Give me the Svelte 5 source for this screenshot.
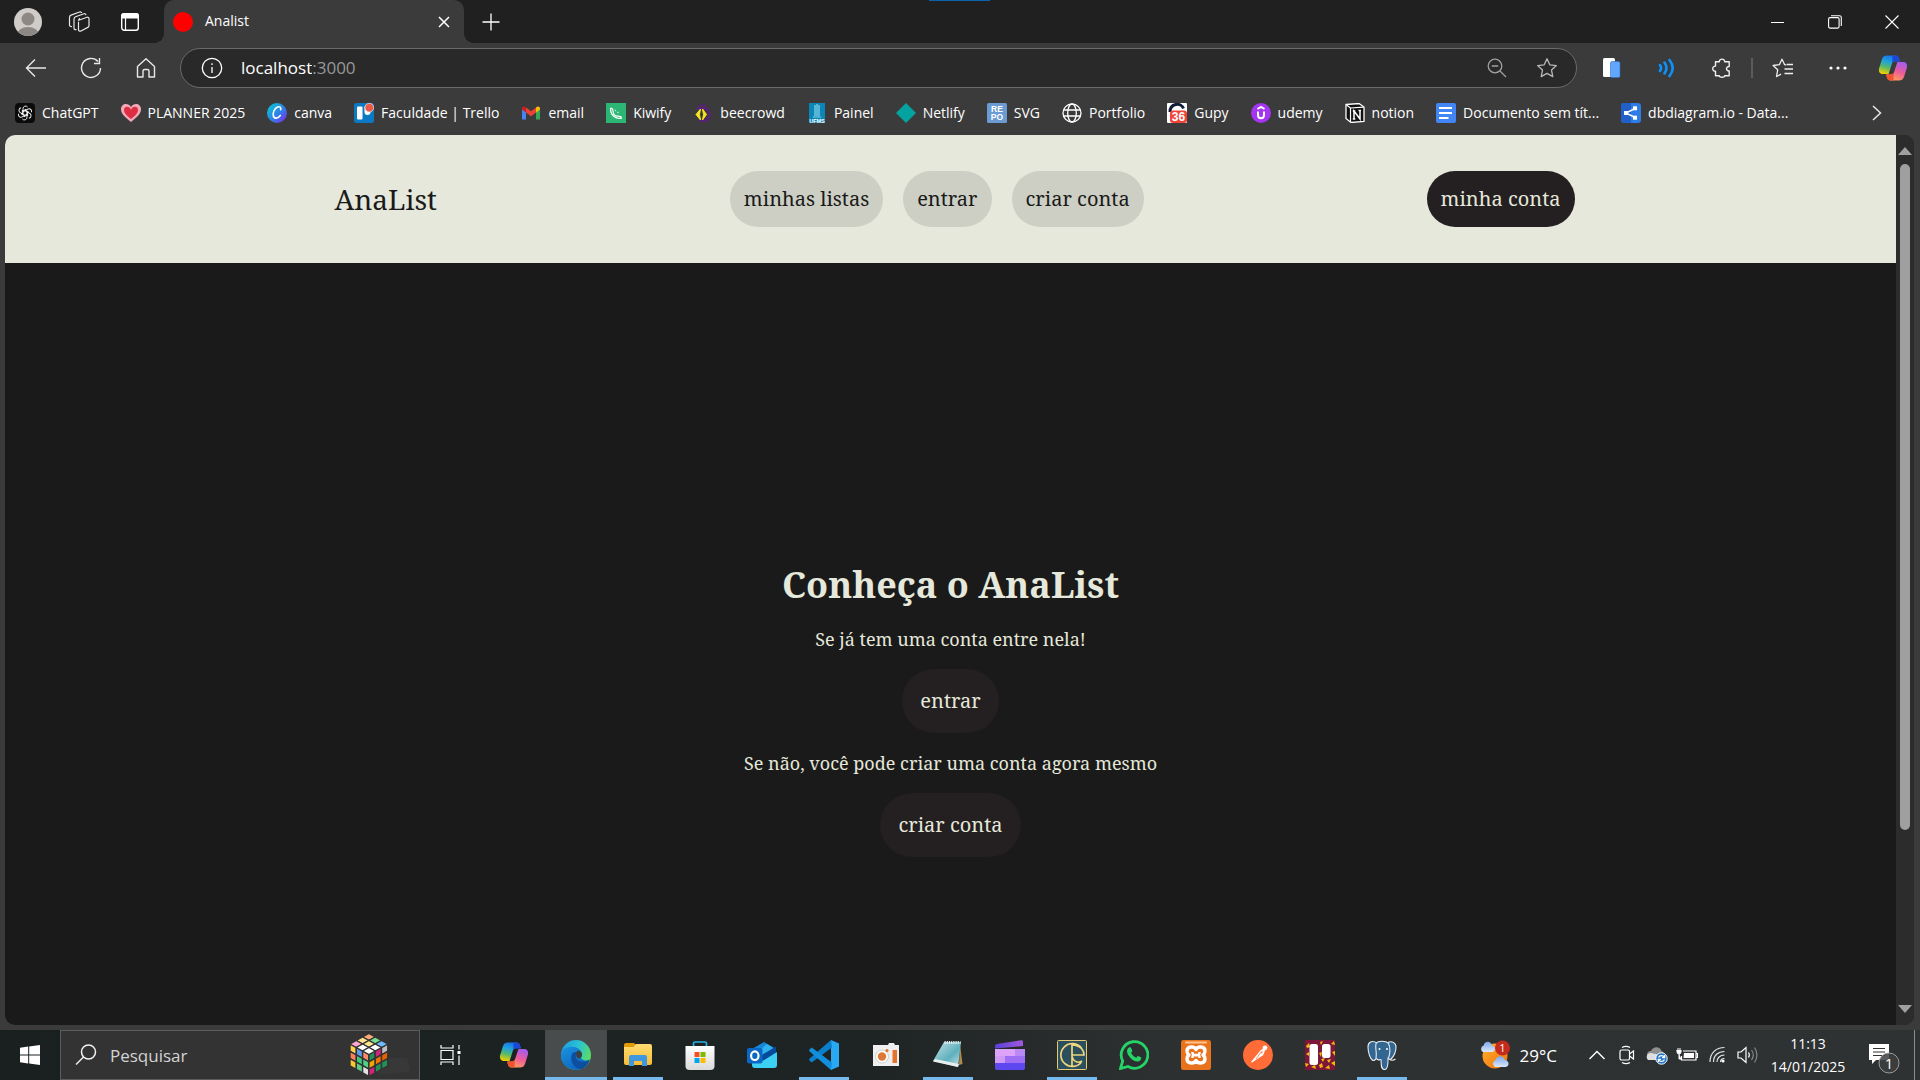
<script>
  const bookmarks = [
    ['chatgpt', 'ChatGPT'],
    ['heart', 'PLANNER 2025'],
    ['canva', 'canva'],
    ['trello', 'Faculdade | Trello'],
    ['gmail', 'email'],
    ['kiwify', 'Kiwify'],
    ['bee', 'beecrowd'],
    ['painel', 'Painel'],
    ['netlify', 'Netlify'],
    ['repo', 'SVG'],
    ['globe', 'Portfolio'],
    ['gupy', 'Gupy'],
    ['udemy', 'udemy'],
    ['notion', 'notion'],
    ['docs', 'Documento sem tít...'],
    ['dbdiagram', 'dbdiagram.io - Data...']
  ];

  const apps = [
    { icon: 'copilot', label: 'Copilot' },
    { icon: 'edge', label: 'Edge', open: true, active: true },
    { icon: 'explorer', label: 'Explorador de Arquivos', open: true },
    { icon: 'store', label: 'Microsoft Store' },
    { icon: 'outlook', label: 'Outlook' },
    { icon: 'vscode', label: 'Visual Studio Code', open: true },
    { icon: 'recorder', label: 'Gravador' },
    { icon: 'notepad', label: 'Bloco de Notas', open: true },
    { icon: 'clipchamp', label: 'Clipchamp' },
    { icon: 'ce', label: 'CE', open: true },
    { icon: 'whatsapp', label: 'WhatsApp' },
    { icon: 'xampp', label: 'XAMPP' },
    { icon: 'postman', label: 'Postman' },
    { icon: 'board', label: 'Trello' },
    { icon: 'postgres', label: 'pgAdmin', open: true }
  ];

  const links = ['minhas listas', 'entrar', 'criar conta'];
</script>

{#snippet bookmarkIcon(name)}
  <svg class="fav" viewBox="0 0 20 20" aria-hidden="true">
    {#if name === 'chatgpt'}
      <rect width="20" height="20" rx="4" fill="#0b0b0b" />
      <g fill="none" stroke="#fff" stroke-width=".9">
        {#each [0, 60, 120, 180, 240, 300] as a}
          <path d="M8 8.900V5.600a2.600 2.600 0 0 1 4.600-1.600M8 8.900l2.700-1.600 3.200 1.900" transform="rotate({a} 10 10)" />
        {/each}
      </g>
    {:else if name === 'heart'}
      <path d="M10 19C4 14 0 11 0 6.300C0 3 2.200 1 5 1c2 0 4 1 5 3 1-2 3-3 5-3 2.800 0 5 2 5 5.300C20 11 16 14 10 19z" fill="#f4a9b8" />
      <path d="M10 16C5.500 12.500 3 10 3 7c0-2 1.300-3.200 3-3.200 2 0 3.200 1.200 4 3 .8-1.800 2-3 4-3 1.700 0 3 1.200 3 3.200 0 3-2.500 5.500-7 9z" fill="#dd2e44" />
    {:else if name === 'canva'}
      <circle cx="10" cy="10" r="10" fill="url(#g-canva)" />
      <path d="M13.600 6.700c.8-2.300-1-3.400-3-2.600C7.400 5.400 5.600 9.700 6.300 12.700c.7 3.300 4.600 3.300 7-.2" fill="none" stroke="#fff" stroke-width="1.600" stroke-linecap="round" />
    {:else if name === 'trello'}
      <rect y="0" width="20" height="20" rx="2.500" fill="#0b79c4" />
      <rect x="3" y="3.500" width="5.500" height="13" rx="1" fill="#fff" />
      <path d="M10.500 3.500h6V9a3 3 0 0 1-6 0z" fill="#fff" />
      <circle cx="15.300" cy="4.700" r="4.400" fill="#eb5a46" stroke="#fff" stroke-width=".6" />
    {:else if name === 'gmail'}
      <path d="M1 5v11.500h4V8z" fill="#4285f4" />
      <path d="M15 8v8.500h4V5z" fill="#34a853" />
      <path d="M15 4.500 10 8.300 5 4.500v5l5 3.800 5-3.800z" fill="#ea4335" />
      <path d="M1 5.500C1 3 3.500 2.800 5 4.500v5L1 6.500z" fill="#c5221f" />
      <path d="M19 5.500C19 3 16.500 2.800 15 4.500v5l4-3z" fill="#fbbc04" />
    {:else if name === 'kiwify'}
      <rect width="20" height="20" fill="#2bb673" />
      <path d="M4.500 5c0 7 3.500 10.500 11 10.500M4.500 5c2 0 2.500 1.500 2.600 3.500.2 3 2 4.800 5 4.700 2 0 3.400.3 3.400 2.300" fill="none" stroke="#fff" stroke-width="1.200" />
      <path d="M9 6.500l1 2M13 9l-2 1" stroke="#fff" stroke-width=".7" />
    {:else if name === 'bee'}
      <path d="M6 3 8 1.500M12 3l-2-1.500M4 5.500h9.500l3.500 6-3.500 6H6" fill="none" stroke="#5b2080" stroke-width="2.400" />
      <path d="M7.500 6 3 11.500 7.500 17 6.500 11.500z" fill="#f8e71c" stroke="#f8e71c" />
      <path d="M9.500 6l4 5.500-4 5.500 1-5.500z" fill="#f8e71c" stroke="#f8e71c" />
    {:else if name === 'painel'}
      <rect x="2" width="16" height="20" fill="#0a86b8" />
      <path d="M8 2v11M10 1v12M12 2v11M6 14h8" stroke="#8fd4ea" stroke-width="1.200" />
      <text x="10" y="19.500" font-size="5.500" font-weight="700" text-anchor="middle" fill="#fff">UFMS</text>
    {:else if name === 'netlify'}
      <path d="M10 0l10 10-10 10L0 10z" fill="#05a3a0" />
    {:else if name === 'repo'}
      <rect width="20" height="20" rx="1.500" fill="#6b9bd2" />
      <g font-size="8.500" font-weight="700" text-anchor="middle" fill="#fff"><text x="10" y="8.800">RE</text><text x="10" y="17.300">PO</text></g>
    {:else if name === 'globe'}
      <g fill="none" stroke="#fff" stroke-width="1.300"><circle cx="10" cy="10" r="9" /><ellipse cx="10" cy="10" rx="4.300" ry="9" /><path d="M1.500 7h17M1.500 13h17" /></g>
    {:else if name === 'gupy'}
      <rect width="20" height="20" rx="1" fill="#fff" />
      <path d="M3 9c0-9 11-10 13.500-3.500" fill="none" stroke="#111c3a" stroke-width="3" />
      <rect x="3" y="7.500" width="17" height="12.500" rx="3" fill="#f04438" />
      <text x="11.500" y="18" font-size="12" font-weight="700" text-anchor="middle" fill="#fff">36</text>
    {:else if name === 'udemy'}
      <circle cx="10" cy="10" r="10" fill="#a435f0" />
      <path d="M6.500 6 10 4l3.500 2M7 8.500V12c0 4.300 6 4.300 6 0V8.500" fill="none" stroke="#fff" stroke-width="2" />
    {:else if name === 'notion'}
      <path d="M1 1.500 14 .5l5 3.500v14.500l-13 1-5-4z" fill="#111" stroke="#fff" stroke-width="1.300" />
      <path d="M1.500 2 5.500 5v14M5.500 5l13-.8" fill="none" stroke="#fff" stroke-width="1.200" />
      <path d="M9 16V8l6 8V7.500M7.800 8h2.500M13.500 7.500h2.500M7.800 16h2.500" fill="none" stroke="#fff" stroke-width="1.500" />
    {:else if name === 'docs'}
      <rect width="20" height="20" rx="2" fill="#4285f4" />
      <path d="M3 5h13M3 10h13M3 15h9.500" stroke="#fff" stroke-width="2.200" />
    {:else}
      <rect width="20" height="20" rx="3" fill="#2f7be8" />
      <path d="M3 0h7v20H3a3 3 0 0 1-3-3V3a3 3 0 0 1 3-3z" fill="#2160c9" />
      <path d="M14 5.500 5 10l9 4.500" fill="none" stroke="#fff" stroke-width="1.400" />
      <g fill="#fff"><rect x="12" y="3.300" width="4" height="4" /><rect x="12" y="12.700" width="4" height="4" /><rect x="3" y="8" width="4" height="4" /></g>
    {/if}
  </svg>
{/snippet}

{#snippet copilot()}
  <path d="M9 2.500h8.500c2 0 3 1 3.500 3l.8 2.800h-4.500c-2 0-3 1-3.500 2.800L10.600 21H5C1.500 21 .3 18.500 1.200 15L4 6c.8-2.400 2.600-3.500 5-3.500z" fill="url(#g-cop1)" />
  <path d="M14.500 2.500h3c2 0 3 1 3.500 3l.8 2.800h-4c-2 0-3 .8-3.500 2z" fill="#1b48d8" />
  <path d="M21 27.500h-8.500c-2 0-3-1-3.500-3l-.8-3h4.500c2 0 3-1 3.500-2.800L19.400 9H25c3.500 0 4.700 2.500 3.800 6L26 24c-.8 2.400-2.600 3.500-5 3.500z" fill="url(#g-cop2)" />
  <path d="M15.500 27.500h-3c-2 0-3-1-3.500-3l-.8-3h4c2 0 3-.8 3.500-2z" fill="#f0532d" />
{/snippet}

{#snippet appIcon(name)}
  <svg class="app-icon" viewBox="0 0 30 30" aria-hidden="true">
    {#if name === 'copilot'}
      {@render copilot()}
    {:else if name === 'edge'}
      <circle cx="15" cy="15" r="15" fill="url(#g-edge1)" />
      <path d="M0 15C1 8 7 6.500 11.500 6.800 17 7.200 21 10.500 21 14.500c0 1.500-1 2.500-1 3.300 0 1.300 2 2.700 5 2.700 1.500 0 2.800-.5 3.700-1C27 26 21.500 30 15 30 6.500 30-.5 23 0 15z" fill="url(#g-edge2)" />
      <path d="M11 14c-2.500 7 1.500 13.500 8.500 15.300 4.500-1.500 8-5 9.200-9.800-4.500 3.600-12 3-13.700-1.500-.8-2.200.2-4.500 1.600-5.400-2-1.300-4.700-.7-5.600 1.400z" fill="#0d4f9e" />
      <path d="M20 17.500c.8-1 1-2 1-3.200-.3-2.500-2.500-4-4.800-3.500-1.500 2-1.400 4.500-.6 6.200 1.300 1.800 2.800 1.700 4.400.5z" fill="#3a4043" />
    {:else if name === 'explorer'}
      <path d="M1 5a2 2 0 0 1 2-2h8l3 3h-3L9 8H1z" fill="#e09b00" />
      <path d="M1 7h9l3-3h14a2 2 0 0 1 2 2v17a2 2 0 0 1-2 2H3a2 2 0 0 1-2-2z" fill="url(#g-folder)" />
      <path d="M6 26V17a2 2 0 0 1 2-2h14a2 2 0 0 1 2 2v9h-5v-5h-8v5z" fill="#3f97dd" />
    {:else if name === 'store'}
      <path d="M8.500 7V3.500C8.500 2.500 9 2 10 2h10c1 0 1.500.5 1.500 1.500V7" fill="none" stroke="#27b4e8" stroke-width="1.700" />
      <path d="M.5 6h29v20a4 4 0 0 1-4 4h-21a4 4 0 0 1-4-4z" fill="url(#g-store)" />
      <path d="M9.500 12h5v5h-5z" fill="#f25022" /><path d="M15.500 12h5v5h-5z" fill="#7fba00" /><path d="M9.500 18h5v5h-5z" fill="#00a4ef" /><path d="M15.500 18h5v5h-5z" fill="#ffb900" />
    {:else if name === 'outlook'}
      <path d="M5 9 17 2l12 7v7l-9 6H5z" fill="#1587d8" />
      <path d="M20 4l9 6-14 9-9-3z" fill="#30b2ee" />
      <path d="M29 6.500V14L15 21l-2-5z" fill="#064a9b" />
      <path d="M30 12v13a3 3 0 0 1-3 3H8c-2 0-3-1-3-3v-3h9z" fill="#3dd0f5" />
      <rect y="8" width="15.500" height="15.500" rx="2" fill="#0b67c4" />
      <ellipse cx="7.800" cy="15.700" rx="3.700" ry="4.300" fill="none" stroke="#fff" stroke-width="2.200" />
    {:else if name === 'vscode'}
      <path d="M22 0l8 3.500v23L22 30z" fill="#29a9f2" />
      <path d="M22 0 .7 18.500c-.8.700-.8 1.500 0 2.200l2 1.800L23 7.500z" fill="#0b7fcb" />
      <path d="M22 30 .7 11.500c-.8-.7-.8-1.500 0-2.200l2-1.800L23 22.500z" fill="#128fdc" />
    {:else if name === 'recorder'}
      <path d="M2 5h15l1-2h5l1 2h4v21H2z" fill="#efefef" />
      <circle cx="11" cy="16.500" r="6.500" fill="#fff" stroke="#cfcfcf" /><circle cx="11" cy="16.500" r="4.200" fill="#e07836" />
      <rect x="21.500" y="10" width="4.500" height="13" fill="#e3742c" /><circle cx="16" cy="10.500" r="1.600" fill="#e3742c" />
    {:else if name === 'notepad'}
      <path d="M27 4 29.500 24 26 25z" fill="#b08a4a" />
      <path d="M11 2h17l-3 25L0 21z" fill="url(#g-note)" />
      <path d="M0 21.500 25 27l1-3L2 19z" fill="#e8eeee" />
      <path d="M11.500 2.500h16" stroke="#e9eeee" stroke-width="3" stroke-dasharray="1.200 1" />
    {:else if name === 'clipchamp'}
      <path d="M0 8.500V6c0-1 .7-1.700 1.700-1.900L26 .3c1.300-.2 2 .4 2 1.700v4z" fill="url(#g-clip1)" />
      <path d="M0 9h30v18a3 3 0 0 1-3 3H3a3 3 0 0 1-3-3z" fill="#7c55f2" />
      <path d="M0 9h30v7H0z" fill="#b98af5" /><path d="M0 9h20v7H0z" fill="#dda3fb" /><path d="M0 16h10v7H0z" fill="#ce9af5" /><path d="M10 16h20v7H10z" fill="#a06df5" /><path d="M0 23h30v4a3 3 0 0 1-3 3H3a3 3 0 0 1-3-3z" fill="#5c48ee" />
    {:else if name === 'ce'}
      <rect x=".5" y=".5" width="29" height="29" rx="1" fill="#2b4f5c" stroke="#e3cc75" />
      <path d="M24.500 8A11.500 11.500 0 1 0 24.500 22M15 3.500v23M15 15h12c0-10-12-10-12-10M15 15c0 6 6 9 10 6" fill="none" stroke="#eed57c" stroke-width="1.700" />
    {:else if name === 'whatsapp'}
      <path d="M1.500 28.500 3.700 21A13.300 13.300 0 1 1 9 26.500z" fill="none" stroke="#25d366" stroke-width="2.800" />
      <path d="M10 7.500c1-.6 2 0 2.300.8l1 2.500c.2.600-.9 1.600-1.200 2 1 2.300 2.700 3.900 5.100 4.900.6-.3 1.400-1.900 2-1.700l3 1.500c.5 2.500-2 4-3.800 4C13.500 21.300 8.500 16 8 11.500c-.1-1.500.8-3 2-4z" fill="#25d366" />
    {:else if name === 'xampp'}
      <rect width="30" height="30" rx="2.500" fill="#e8731c" /><rect x="4" y="1.500" width="22" height="2" rx="1" fill="#ffc48e" />
      <path d="M15 9.500C13.500 6 6 6 6 11c0 2 .5 3 2 4-1.500 1-2 2-2 4 0 5 7.500 5 9 1.500 1.500 3.500 9 3.500 9-1.500 0-2-.5-3-2-4 1.500-1 2-2 2-4 0-5-7.500-5-9-1.500z" fill="none" stroke="#fff" stroke-width="3.400" stroke-linejoin="round" />
      <path d="M11.500 12v1.500c0 2 7 1 7 3V18M18.500 12v1.500c0 2-7 1-7 3V18" fill="none" stroke="#fff" stroke-width="2.400" />
    {:else if name === 'postman'}
      <circle cx="15" cy="15" r="15" fill="#ff6c37" />
      <path d="M8 22 16.500 11.500l4 3.500L9 22.500z" fill="#fff" /><path d="M17 12l4-3M19.500 14.500l2-5" stroke="#fff" stroke-width="1.800" /><circle cx="22" cy="7.800" r="2.400" fill="#fff" /><path d="M18.500 11.500 13 19" stroke="#ff6c37" stroke-width=".8" />
    {:else if name === 'board'}
      <rect width="30" height="30" fill="#7c1739" />
      <g fill="#f2b90c"><path d="M1 6l3-3 1 4-3 1zM1 14l3-2 0 4zM0 23l4 1-3 3zM6 27l4-2 1 4zM14 25l3-2 1 4-3 1zM15 2l3-1-2 4zM20 28l4-3 1 4zM26 23l4-2v5zM26 4l3-3 1 4zM27 12l3-1v5zM16 19l4-1-2 4zM22 20l4-1-2 4zM14 13l3-1-1 5z" /></g>
      <rect x="4.500" y="4" width="8.500" height="21" rx="2.500" fill="#fff" /><rect x="17" y="4" width="8.500" height="14" rx="2.500" fill="#fff" />
    {:else}
      <g fill="#336791" stroke="#e6edf3" stroke-width="1.100" stroke-linejoin="round">
        <path d="M20 3c5-3 9 0 9 4 0 5-3 10-5 12-2 1-4-1-4-3z" />
        <path d="M10 3C5 0 1 2 1 7c0 5 2 12 5 13.500C8 21 10 18 10 16z" />
        <path d="M9 3.500C11 .5 19 .5 21.500 3.500c2 4 1.500 9 .5 13-1.500 1-1 2-1 4 0 4 0 9-3.500 9-4 0-3-5-3.500-10-2 1-5 0-5-2 1-5-1-9 0-14z" />
        <path d="M22 19c2 1.500 4.500 1.500 6.500 0" fill="none" />
      </g>
      <circle cx="12.500" cy="9" r="1" fill="#fff" /><circle cx="20" cy="9" r="1" fill="#fff" />
    {/if}
  </svg>
{/snippet}

<svg class="defs" aria-hidden="true">
  <defs>
    <linearGradient id="g-canva" x1="0" y1="0" x2="1" y2="1"><stop offset="0" stop-color="#00d0d0" /><stop offset=".55" stop-color="#2f80e8" /><stop offset="1" stop-color="#8b1fe8" /></linearGradient>
    <linearGradient id="g-cop1" x1=".6" y1="0" x2=".3" y2="1"><stop offset="0" stop-color="#1a6fe8" /><stop offset=".35" stop-color="#1fa2dc" /><stop offset=".65" stop-color="#56b96b" /><stop offset="1" stop-color="#f0d000" /></linearGradient>
    <linearGradient id="g-cop2" x1=".7" y1="0" x2=".3" y2="1"><stop offset="0" stop-color="#a45cf0" /><stop offset=".5" stop-color="#ee5c97" /><stop offset="1" stop-color="#ffa05c" /></linearGradient>
    <linearGradient id="g-edge1" x1="0" y1=".2" x2="1" y2=".6"><stop offset="0" stop-color="#1b9de0" /><stop offset=".5" stop-color="#2cc2d2" /><stop offset="1" stop-color="#5fe05a" /></linearGradient>
    <linearGradient id="g-edge2" x1="0" y1="0" x2=".7" y2="1"><stop offset="0" stop-color="#1a93e0" /><stop offset="1" stop-color="#0c62ba" /></linearGradient>
    <linearGradient id="g-folder" x1="0" y1="0" x2="0" y2="1"><stop offset="0" stop-color="#ffdc72" /><stop offset="1" stop-color="#f6bd37" /></linearGradient>
    <linearGradient id="g-store" x1="0" y1="0" x2="0" y2="1"><stop offset="0" stop-color="#fff" /><stop offset="1" stop-color="#d9d9d9" /></linearGradient>
    <linearGradient id="g-note" x1="0" y1="0" x2="1" y2="1"><stop offset="0" stop-color="#c5e2e6" /><stop offset=".6" stop-color="#5fb0bd" /><stop offset="1" stop-color="#c9e8ec" /></linearGradient>
    <linearGradient id="g-clip1"><stop offset="0" stop-color="#5742d8" /><stop offset="1" stop-color="#a458e0" /></linearGradient>
    <linearGradient id="g-sun" x1="0" y1="0" x2="1" y2="1"><stop offset="0" stop-color="#ffb12a" /><stop offset="1" stop-color="#f0700d" /></linearGradient>
    <linearGradient id="g-cloud" x1="0" y1="0" x2="0" y2="1"><stop offset="0" stop-color="#7ba9ee" /><stop offset="1" stop-color="#dbe8fb" /></linearGradient>
  </defs>
</svg>

<div class="screen">
  <div class="browser">
    <div class="tabstrip">
      <div class="accent"></div>
      <div class="strip-tools">
        <button aria-label="Perfil"><svg width="28" height="28" viewBox="0 0 28 28"><clipPath id="avatar"><circle cx="14" cy="14" r="14" /></clipPath><g clip-path="url(#avatar)"><rect width="28" height="28" fill="#cfccc9" /><circle cx="14" cy="11" r="6.500" fill="#8e8885" /><ellipse cx="14" cy="27" rx="11" ry="8" fill="#8e8885" /></g></svg></button>
        <button aria-label="Workspaces"><svg width="22" height="22" viewBox="0 0 22 22" fill="none" stroke="#e8e8e8" stroke-width="1.200"><path d="M10 9.500 19 6.300c1-.3 2 .3 2 1.400v6.800c0 .8-.4 1.500-1.200 1.900L13 20c-1.200.5-2.500 0-2.500-1.300v-8M10.500 10c0-1.500 0-2 1.500-2.600" /><path d="M8.500 18.500c-1.500.5-2.500-.2-2.500-1.500V8.300C6 7 6.400 6.200 7.500 5.800L16 2.800c1-.3 1.900.2 2 1.300M4 15.500c-1.500.3-2.500-.4-2.500-1.600V6.500c0-1.200.5-2 1.500-2.400L11.500 1c1-.3 1.900.1 2.200 1" /></svg></button>
        <button aria-label="Guias verticais"><svg width="18" height="18" viewBox="0 0 18 18"><rect x=".7" y=".7" width="16.600" height="16.600" rx="2.500" fill="none" stroke="#fff" stroke-width="1.400" /><path d="M0 3a3 3 0 0 1 3-3h12a3 3 0 0 1 3 3v2.500H0z" fill="#fff" /><path d="M4.500 5v12.500" stroke="#fff" stroke-width="1.200" /></svg></button>
      </div>
      <div class="tab">
        <span class="tab-dot"></span>
        <span class="tab-title">Analist</span>
        <button aria-label="Fechar guia"><svg width="12" height="12" viewBox="0 0 12 12" stroke="#fff" stroke-width="1.500"><path d="M1 1l10 10M11 1 1 11" /></svg></button>
      </div>
      <button class="new-tab" aria-label="Nova guia"><svg width="18" height="18" viewBox="0 0 18 18" stroke="#fff" stroke-width="1.300"><path d="M9 .5v17M.5 9h17" /></svg></button>
      <div class="window-controls">
        <button aria-label="Minimizar"><svg width="14" height="14" viewBox="0 0 14 14" stroke="#fff"><path d="M0 7.500h13" /></svg></button>
        <button aria-label="Restaurar"><svg width="14" height="14" viewBox="0 0 14 14" fill="none" stroke="#fff" stroke-width="1.100"><rect x=".6" y="2.600" width="10.500" height="10.500" rx="1.500" /><path d="M3 .8h8.500c1 0 1.800.8 1.800 1.800V11" /></svg></button>
        <button aria-label="Fechar"><svg width="14" height="14" viewBox="0 0 14 14" stroke="#fff" stroke-width="1.100"><path d="M.5.5l13 13M13.500.5l-13 13" /></svg></button>
      </div>
    </div>

    <div class="toolbar">
      <button aria-label="Voltar"><svg width="22" height="20" viewBox="0 0 22 20" fill="none" stroke="#e8e8e8" stroke-width="1.400"><path d="M10 1.500 1.500 10l8.500 8.500M1.500 10H21" /></svg></button>
      <button aria-label="Atualizar"><svg width="22" height="22" viewBox="0 0 22 22" fill="none" stroke="#e8e8e8" stroke-width="1.400"><path d="M20.500 11A9.500 9.500 0 1 1 18 4.500M19.500 1v5.500H14" /></svg></button>
      <button aria-label="Página inicial"><svg width="20" height="22" viewBox="0 0 20 22" fill="none" stroke="#e8e8e8" stroke-width="1.400"><path d="M1.500 9.500 10 1.800l8.500 7.700V20H13v-6c0-1-.5-1.500-1.500-1.500h-3C7.500 12.500 7 13 7 14v6H1.500z" stroke-linejoin="round" /></svg></button>
      <div class="omnibox">
        <svg width="22" height="22" viewBox="0 0 22 22" fill="none" stroke="#fff" stroke-width="1.300"><circle cx="11" cy="11" r="9.700" /><path d="M11 10v6M11 6.200v1.800" /></svg>
        <div class="address"><input aria-label="Endereço" value="localhost" /><span>:3000</span></div>
        <button aria-label="Zoom"><svg width="20" height="20" viewBox="0 0 20 20" fill="none" stroke="#a0a0a0" stroke-width="1.300"><circle cx="8" cy="8" r="6.800" /><path d="M13 13l6 6M4.800 8h6.400" /></svg></button>
        <button aria-label="Favoritar"><svg width="22" height="22" viewBox="0 0 22 22" fill="none" stroke="#b8b8b8" stroke-width="1.300" stroke-linejoin="round"><path d="M11 1.800l2.800 6 6.600.8-4.900 4.500 1.300 6.500-5.800-3.200-5.800 3.200 1.300-6.500L1.600 8.600l6.600-.8z" /></svg></button>
      </div>
      <button aria-label="Área de transferência"><svg width="18" height="20" viewBox="0 0 18 20"><rect width="12" height="19" rx="1.500" fill="#fff" /><rect x="7.500" y="3.500" width="9.500" height="16" rx="1.500" fill="#62a6ff" stroke="#2e6cc8" stroke-width=".6" /></svg></button>
      <button aria-label="Ler em voz alta"><svg width="18" height="20" viewBox="0 0 18 20" fill="none" stroke="#0a93ff" stroke-width="2.600" stroke-linecap="round"><path d="M2 7c1.300 1.800 1.300 4.200 0 6M6.500 4.500c2.500 3.500 2.500 7.500 0 11M11.500 2c4 5 4 11 0 16" /></svg></button>
      <button aria-label="Extensões"><svg width="20" height="20" viewBox="0 0 20 20" fill="none" stroke="#f0f0f0" stroke-width="1.400" stroke-linejoin="round"><path d="M7.300 3.800C7.200.2 12.800.2 12.700 3.800h4.500v4.700c-3.600-.2-3.600 4.700 0 4.500v4.700h-4.500c.1 2-5.500 2-5.400 0H3.500v-4.400C-.2 13.400-.2 8 3.500 8.100V3.800z" /></svg></button>
      <span class="divider"></span>
      <button aria-label="Favoritos"><svg width="22" height="20" viewBox="0 0 22 20" fill="none" stroke="#f0f0f0" stroke-width="1.300" stroke-linejoin="round"><path d="M14 7 12.700 6.700 10 1.200 7.300 6.700l-6.200.8 4.600 4.300L4.500 18.500l4.500-2.300M14.500 6.500H21M12.500 11H21M12.500 15.500H21" /></svg></button>
      <button aria-label="Mais"><svg width="18" height="4" viewBox="0 0 18 4" fill="#fff"><circle cx="2" cy="2" r="1.600" /><circle cx="9" cy="2" r="1.600" /><circle cx="16" cy="2" r="1.600" /></svg></button>
      <button aria-label="Copilot"><svg width="30" height="30" viewBox="0 0 30 30">{@render copilot()}</svg></button>
    </div>

    <nav class="bookmarks" aria-label="Favoritos">
      {#each bookmarks as [icon, label]}
        <a href="#{icon}">{@render bookmarkIcon(icon)}<span>{label}</span></a>
      {/each}
      <button aria-label="Mais favoritos"><svg width="10" height="16" viewBox="0 0 10 16" fill="none" stroke="#e8e8e8" stroke-width="1.500"><path d="M1 1l7.500 7L1 15" /></svg></button>
    </nav>

    <div class="viewport">
      <div class="page">
        <header>
          <span class="brand">AnaList</span>
          <nav>{#each links as link}<a href="#{link}">{link}</a>{/each}</nav>
          <button class="account">minha conta</button>
        </header>
        <main>
          <h1>Conheça o AnaList</h1>
          <p>Se já tem uma conta entre nela!</p>
          <button>entrar</button>
          <p>Se não, você pode criar uma conta agora mesmo</p>
          <button>criar conta</button>
        </main>
      </div>
      <div class="scrollbar">
        <svg width="14" height="8" viewBox="0 0 14 8" fill="#a0a0a0"><path d="M7 0l7 8H0z" /></svg>
        <div class="track"><div class="thumb"></div></div>
        <svg width="14" height="8" viewBox="0 0 14 8" fill="#a0a0a0"><path d="M7 8l7-8H0z" /></svg>
      </div>
    </div>
  </div>

  <footer class="taskbar">
    <button class="start" aria-label="Iniciar"><svg width="20" height="20" viewBox="0 0 20 20" fill="#fff"><path d="M0 2.700 8.200 1.600v7.900H0zM9.200 1.400 20 0v9.500H9.200zM0 10.500h8.200v7.900L0 17.300zM9.200 10.500H20V20L9.200 18.600z" /></svg></button>
    <label class="search">
      <svg width="22" height="22" viewBox="0 0 22 22" fill="none" stroke="#f0f0f0" stroke-width="1.500"><circle cx="13.500" cy="8" r="7" /><path d="M8.500 13 1 20.500" /></svg>
      <input type="search" placeholder="Pesquisar" aria-label="Pesquisar" />
      <svg width="66" height="44" viewBox="0 0 66 44">
        <path d="M30 25h28l4 13-32 4z" fill="#383838" />
        <g stroke="#333" stroke-width="1.400">
          {#each ['#ffd24a', '#5b9cf0', '#ff8a65', '#ff7f5c', '#3ec878', '#4fd08a', '#f9c831', '#57cf86', '#e2e2e2'] as c, i}
            <path fill={c} d="M0 0l6.300 3.500v7.300L0 7.300z" transform="translate({1 + (i % 3) * 6.3} {11 + (i % 3) * 3.5 + Math.floor(i / 3) * 7.3})" />
          {/each}
          {#each ['#23905a', '#d2247c', '#bdbdbd', '#f0a800', '#f07400', '#e86100', '#d2247c', '#23905a', '#23905a'] as c, i}
            <path fill={c} d="M0 0l6.300-3.500v7.300L0 7.300z" transform="translate({19.9 + (i % 3) * 6.3} {21.5 - (i % 3) * 3.5 + Math.floor(i / 3) * 7.3})" />
          {/each}
          {#each ['#ffaa7d', '#74e08f', '#6dbcff', '#ffe28a', '#ffe58b', '#fff', '#ffa6d2', '#fff', '#fff'] as c, i}
            <path fill={c} d="M0 0l6.300 3.500L0 7l-6.300-3.500z" transform="translate({19.9 + (i % 3) * 6.3 - Math.floor(i / 3) * 6.3} {0.5 + (i % 3) * 3.5 + Math.floor(i / 3) * 3.5})" />
          {/each}
        </g>
      </svg>
    </label>
    <button class="cell task-view" aria-label="Visão de tarefas"><svg width="21" height="20" viewBox="0 0 21 20" fill="none" stroke="#fff" stroke-width="1.200"><path d="M1 0v3h12V0M1 20v-3h12v3M1 5.500h12v9H1zM19 0v4.500M19 10.500V20" /><rect x="17.500" y="6" width="3" height="3" fill="#fff" stroke="none" /></svg></button>
    {#each apps as app}
      <button class="cell" class:open={app.open} class:active={app.active} aria-label={app.label}>{@render appIcon(app.icon)}</button>
    {/each}

    <div class="tray">
      <button class="weather">
        <svg width="30" height="30" viewBox="0 0 30 30"><circle cx="15" cy="16" r="12.500" fill="url(#g-sun)" /><path d="M3 12a3.500 3.500 0 0 1 .7-6.500C4.500.5 11 .5 12 5.500c4 .5 4 6 .5 6.500z" fill="url(#g-cloud)" /><path d="M15 27a3.800 3.800 0 0 1 .7-7c1-5 8-5 9 0 5 .3 5 6.500 1 7z" fill="url(#g-cloud)" /><circle cx="22.500" cy="8" r="7.500" fill="#c42b1c" /><text x="22.500" y="12" font-size="11" text-anchor="middle" fill="#fff">1</text></svg>
        <span>29°C</span>
      </button>
      <button class="tray-icon" aria-label="Ícones ocultos"><svg width="18" height="20" viewBox="0 0 18 20" fill="none" stroke="#fff" stroke-width="1.400"><path d="M1.500 14 9 6.500l7.500 7.500" /></svg></button>
      <button class="tray-icon" aria-label="Reunir agora"><svg width="18" height="20" viewBox="0 0 18 20" fill="none" stroke="#fff" stroke-width="1.200"><rect x="2" y="5" width="9.500" height="10" rx="1.500" /><path d="M11.500 9 15.500 6v8l-4-3M4 2.500c2.500-1.500 5.500-1.500 8 0M4 17.500c2.500 1.500 5.500 1.500 8 0" /></svg></button>
      <button class="tray-icon" aria-label="OneDrive"><svg width="22" height="20" viewBox="0 0 22 20"><path d="M5 14a4 4 0 0 1 0-8C7 1 14 1 15.500 6c4 1 4 8 0 8z" fill="#8f8f8f" /><path d="M2 15c-4-5 2-9 6-6 3-1 5 2 4 6z" fill="#dedede" /><circle cx="15.500" cy="13.500" r="5.700" fill="#1e75c9" stroke="#fff" /><path d="M12.500 12.500c1-2.500 5-2.500 6 0M18.500 14.500c-1 2.500-5 2.500-6 0M18.700 10v2.700H16M12.300 17v-2.700H15" fill="none" stroke="#fff" stroke-width="1.200" /></svg></button>
      <button class="tray-icon" aria-label="Bateria"><svg width="22" height="20" viewBox="0 0 22 20"><path d="M7 6H20v9H5.500V11M20 8.500h1.500v4H20" fill="none" stroke="#fff" stroke-width="1.200" /><path d="M8 8h10v5H7.500z" fill="#fff" /><path d="M.5 5.500h5M1 5.500V7a2 2 0 0 0 4 0V5.500zM2 3v2M4 3v2M3 9v5h2.500" fill="#fff" stroke="#fff" stroke-width="1" /></svg></button>
      <button class="tray-icon" aria-label="Rede"><svg width="18" height="20" viewBox="0 0 18 20" fill="none" stroke="#e4e4e4" stroke-width="1.200"><path d="M2 17C2 8 8 2.500 16.500 2.500M5.500 17C5.500 10.500 10 6.500 16.500 6.500M9 17c0-4 3-7 7.500-7" /><path d="M12.500 17c0-2 1.500-3.500 4-3.500" /><circle cx="15" cy="16" r="1.600" fill="#fff" stroke="none" /></svg></button>
      <button class="tray-icon" aria-label="Volume"><svg width="21" height="20" viewBox="0 0 21 20" fill="none" stroke="#fff" stroke-width="1.200"><path d="M1 7h3l5-4.500v15L4 13H1zM11.500 7.500c1 1.500 1 3.500 0 5" /><path d="M14.500 5c2.200 3 2.200 7 0 10M17.500 2.500c3.200 4.500 3.200 10.500 0 15" stroke="#858788" /></svg></button>
      <button class="clock"><span>11:13</span><span>14/01/2025</span></button>
      <button class="notices" aria-label="Notificações"><svg width="32" height="32" viewBox="0 0 32 32"><path d="M1 2h20v16H8l-4 4v-4H1z" fill="#fff" /><path d="M5 6.500h12M5 10h12M5 13.500h12" stroke="#333" stroke-width="1.200" /><circle cx="21" cy="21" r="10" fill="#3c3e3f" fill-opacity=".85" stroke="#9a9a9a" /><text x="21" y="26.500" font-size="15" text-anchor="middle" fill="#fff">1</text></svg></button>
      <span class="peek"></span>
    </div>
  </footer>
</div>

<style>
  :global(body) { margin: 0; background: #3b3b3b; }
  .screen { display: flex; flex-direction: column; min-height: 100vh; font-family: "Segoe UI", "Open Sans", "Noto Sans", sans-serif; font-size: 14px; color: #fff; }
  .screen * { box-sizing: border-box; }
  .defs { position: absolute; width: 0; height: 0; }
  button { display: flex; align-items: center; justify-content: center; padding: 0; border: 0; background: none; color: inherit; font: inherit; cursor: pointer; }
  svg { display: block; flex: none; }
  input { min-width: 0; padding: 0; border: 0; outline: 0; background: none; color: inherit; font: inherit; }
  a { color: inherit; text-decoration: none; }

  .browser { flex: 1; display: flex; flex-direction: column; background: #3b3b3b; }
  .tabstrip { position: relative; display: flex; height: 43px; background: #202020; }
  .accent { position: absolute; top: 0; left: calc(50% - 31px); width: 61px; height: 1px; background: #0a64ad; }
  .strip-tools { display: flex; width: 164px; padding-left: 2px; }
  .strip-tools button { width: 51px; }
  .tab { position: relative; display: flex; align-items: center; width: 300px; padding: 0 14px 0 9px; border-radius: 10px 10px 0 0; background: #3b3b3b; }
  .tab::before, .tab::after { content: ""; position: absolute; bottom: 0; width: 10px; height: 10px; }
  .tab::before { right: 100%; background: radial-gradient(circle at 0 0, #202020 10px, #3b3b3b 10px); }
  .tab::after { left: 100%; background: radial-gradient(circle at 100% 0, #202020 10px, #3b3b3b 10px); }
  .tab-dot { width: 20px; height: 20px; border-radius: 50%; background: #f00; }
  .tab-title { flex: 1; margin-left: 12px; padding-bottom: 2px; }
  .new-tab { width: 54px; }
  .window-controls { display: flex; margin-left: auto; }
  .window-controls button { width: 57px; }

  .toolbar { display: flex; align-items: center; height: 50px; padding-left: 8px; }
  .toolbar > button { width: 55px; height: 40px; }
  .omnibox { flex: 1; display: flex; align-items: center; height: 40px; margin: 0 7px; padding: 0 4px 0 20px; border: 1px solid #6a6a6a; border-radius: 20px; background: #292929; }
  .omnibox button { width: 50px; height: 30px; }
  .address { flex: 1; display: flex; margin-left: 18px; padding-bottom: 2px; font-size: 17px; }
  .address input { field-sizing: content; }
  .address span { color: #989898; }
  .divider { width: 2px; height: 20px; margin: 0 2px; background: #5c5c5c; }

  .bookmarks { display: flex; align-items: center; gap: 22px; height: 42px; padding: 0 38px 2px 15px; white-space: nowrap; }
  .bookmarks a { display: flex; align-items: center; gap: 7px; }
  .bookmarks span { padding-bottom: 2px; }
  .bookmarks button { margin-left: auto; }
  .fav { width: 20px; height: 20px; font-family: "Liberation Sans", sans-serif; }

  .viewport { flex: 1; display: flex; margin: 0 6px 5px 5px; overflow: hidden; border-radius: 10px; background: #1a1a1a; }
  .page { flex: 1; display: flex; flex-direction: column; font-family: "Noto Serif", "DejaVu Serif Condensed", "DejaVu Serif", serif; }
  header { display: flex; align-items: center; justify-content: space-between; height: 128px; padding: 0 17%; background: #e5e8da; color: #1a1a1a; }
  .brand { margin: 0 10px 0 8px; font-size: 28px; }
  header nav { display: flex; gap: 20px; }
  header a, .account { padding: 14px; border-radius: 28px; background: #cdcfc4; font-size: 20px; line-height: 28px; }
  .account { background: #241f20; color: #e5e8da; }
  main { flex: 1; display: flex; flex-direction: column; align-items: center; justify-content: center; padding-top: 128px; color: #e5e8da; }
  h1 { margin: 0 0 14px; font-size: 36px; line-height: 52px; }
  p { margin: 0 0 16px; font-size: 18px; line-height: 28px; }
  main button { margin-bottom: 16px; padding: 18px; border-radius: 32px; background: #241f20; font-size: 20px; line-height: 28px; }
  main button:last-child { margin-bottom: 0; }
  .scrollbar { display: flex; flex-direction: column; align-items: center; width: 18px; padding: 12px 0; background: #2c2c2c; }
  .track { flex: 1; width: 10px; margin: 9px 0; }
  .thumb { height: 80%; border-radius: 5px; background: #9f9f9f; }

  .taskbar { display: flex; height: 50px; background: linear-gradient(90deg, #1a2020, #1e2323 45%, #2d3031 60%, #2f3233); }
  .start { width: 60px; }
  .search { display: flex; align-items: center; width: 360px; padding: 0 4px 0 14px; border: 1px solid #5c5c5c; background: #333; }
  .search input { flex: 1; margin-left: 13px; font-size: 17px; }
  .search input::placeholder { color: #d4d4d4; opacity: 1; }
  .cell { position: relative; width: 62px; }
  .task-view { width: 63px; padding-right: 3px; }
  .app-icon { width: 30px; height: 30px; }
  .active { background: #484c4d; }
  .open::after { content: ""; position: absolute; right: 6px; bottom: 0; left: 6px; height: 3px; background: #76b9ed; }
  .active::after { right: 0; left: 0; }
  .tray { display: flex; margin-left: auto; }
  .weather { gap: 10px; margin-right: 25px; font-size: 17px; }
  .tray-icon { width: 30px; }
  .clock { flex-direction: column; width: 92px; font-size: 14px; line-height: 23px; }
  .notices { width: 60px; padding-top: 6px; }
  .peek { width: 6px; border-left: 1px solid #8a8c8c; }
</style>
